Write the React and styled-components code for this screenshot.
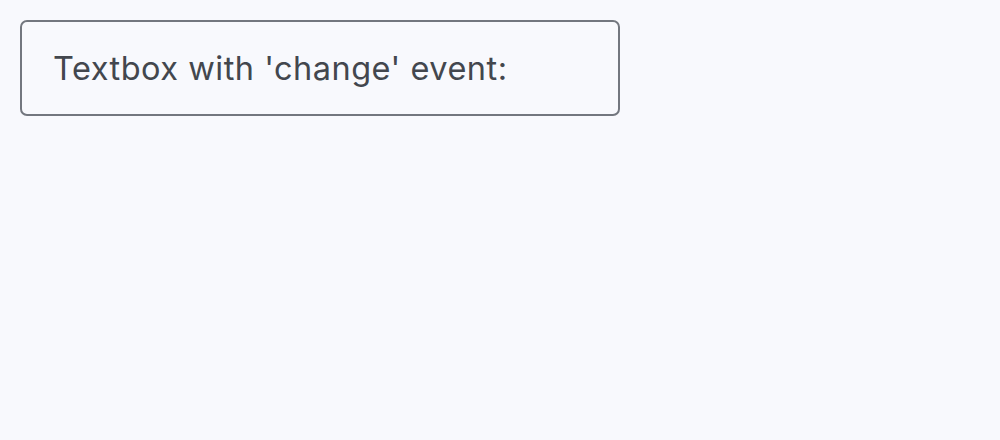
import styled, { createGlobalStyle } from "styled-components";

const GlobalStyle = createGlobalStyle`
  html, body {
    margin: 0;
    padding: 0;
    background: #f8f9fd;
  }
  body {
    font-family: Inter, "Noto Sans", sans-serif;
  }
`;

const Page = styled.div`
  padding: 20px;
`;

const Field = styled.label`
  box-sizing: border-box;
  display: flex;
  align-items: center;
  width: 600px;
  height: 96px;
  padding: 2px 31px 0 31px;
  border: 2px solid #73777f;
  border-radius: 7px;
  color: #43474e;
  font-size: 32.5px;
  line-height: 1;
  letter-spacing: 0.5px;
`;

const App = () => {
  return (
    <Page>
      <GlobalStyle />
      <Field>Textbox with 'change' event:</Field>
    </Page>
  );
};

export default App;
